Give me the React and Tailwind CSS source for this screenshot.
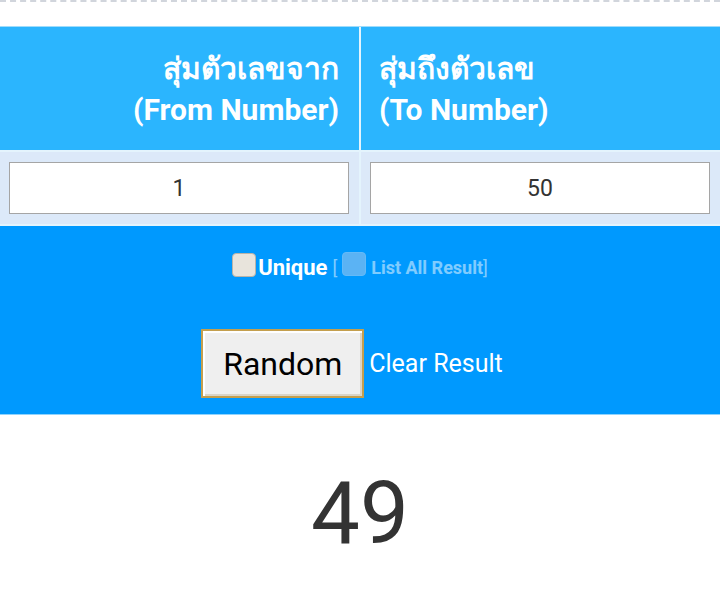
import React, { useState } from "react";

const font = { fontFamily: "Roboto, 'Noto Sans', 'DejaVu Sans', sans-serif" };

const App = () => {
  const [from, setFrom] = useState("1");
  const [to, setTo] = useState("50");
  const [unique, setUnique] = useState(false);
  const [result, setResult] = useState("49");

  const onRandom = () => {
    const a = parseInt(from, 10) || 0;
    const b = parseInt(to, 10) || 0;
    setResult(String(Math.floor(Math.random() * (b - a + 1)) + a));
  };

  return (
    <div className="w-[720px] h-[605px] bg-white overflow-hidden" style={font}>
      {/* dashed rule at the top */}
      <div className="h-[2px] border-b-2 border-dashed border-gray-300" />
      <div className="h-[24px]" />

      {/* from / to table */}
      <div className="grid grid-cols-2 gap-[2px] bg-[#e4f4fd] border-t border-[#9fdcfb]">
        <div className="h-[123px] bg-[#2bb5fe] flex flex-col justify-center items-end pr-[20px] text-white font-bold text-[30px] leading-[41px]">
          <span>สุ่มตัวเลขจาก</span>
          <span>(From Number)</span>
        </div>
        <div className="h-[123px] bg-[#2bb5fe] flex flex-col justify-center items-start pl-[18px] text-white font-bold text-[30px] leading-[41px]">
          <span>สุ่มถึงตัวเลข</span>
          <span>(To Number)</span>
        </div>
        <div className="h-[72px] bg-[#dce9f9] flex items-center pl-[9px] pr-[10px]">
          <input
            value={from}
            onChange={(e) => setFrom(e.target.value)}
            className="w-full h-[52px] bg-white border border-[#a5a5a5] text-center text-[23px] text-[#333]"
          />
        </div>
        <div className="h-[72px] bg-[#dce9f9] flex items-center pl-[9px] pr-[10px]">
          <input
            value={to}
            onChange={(e) => setTo(e.target.value)}
            className="w-full h-[52px] bg-white border border-[#a5a5a5] text-center text-[23px] text-[#333]"
          />
        </div>
      </div>

      {/* options + buttons */}
      <div className="bg-[#0099fe] border-t-2 border-[#e4f4fd] border-b border-b-[#8fd3fd] h-[191px] flex flex-col items-center">
        <div className="mt-[25px] flex items-center text-white">
          <button
            type="button"
            onClick={() => setUnique(!unique)}
            className="w-[24px] h-[24px] rounded-[4px] bg-[#e8e4dc] border border-[#b9b4aa] -mt-[6px]"
          />
          <span className="font-bold text-[22px] ml-[2px]">Unique</span>
          <span className="ml-[5px] flex items-center opacity-50 text-[18px] font-bold">
            <span className="font-normal">[</span>
            <span className="w-[24px] h-[24px] rounded-[4px] bg-[#b6cdec] border border-[#c8dcf2] -mt-[8px] mx-[5px]" />
            <span>List All Result</span>
            <span className="font-normal">]</span>
          </span>
        </div>
        <div className="mt-[45px] flex items-center pr-[16px]">
          <button
            type="button"
            onClick={onRandom}
            className="w-[163px] h-[69px] bg-[#efefef] border-2 border-[#c49f4e] shadow-[inset_2px_2px_0_#fff,inset_-2px_-2px_0_#d9d4c8] text-[32px] text-black"
          >
            Random
          </button>
          <button
            type="button"
            onClick={() => setResult("")}
            className="ml-[5px] text-[25px] text-white"
          >
            Clear Result
          </button>
        </div>
      </div>

      {/* result */}
      <div className="flex justify-center pt-[46px]">
        <span className="text-[87px] leading-[104px] text-[#333]">{result}</span>
      </div>
    </div>
  );
};

export default App;
